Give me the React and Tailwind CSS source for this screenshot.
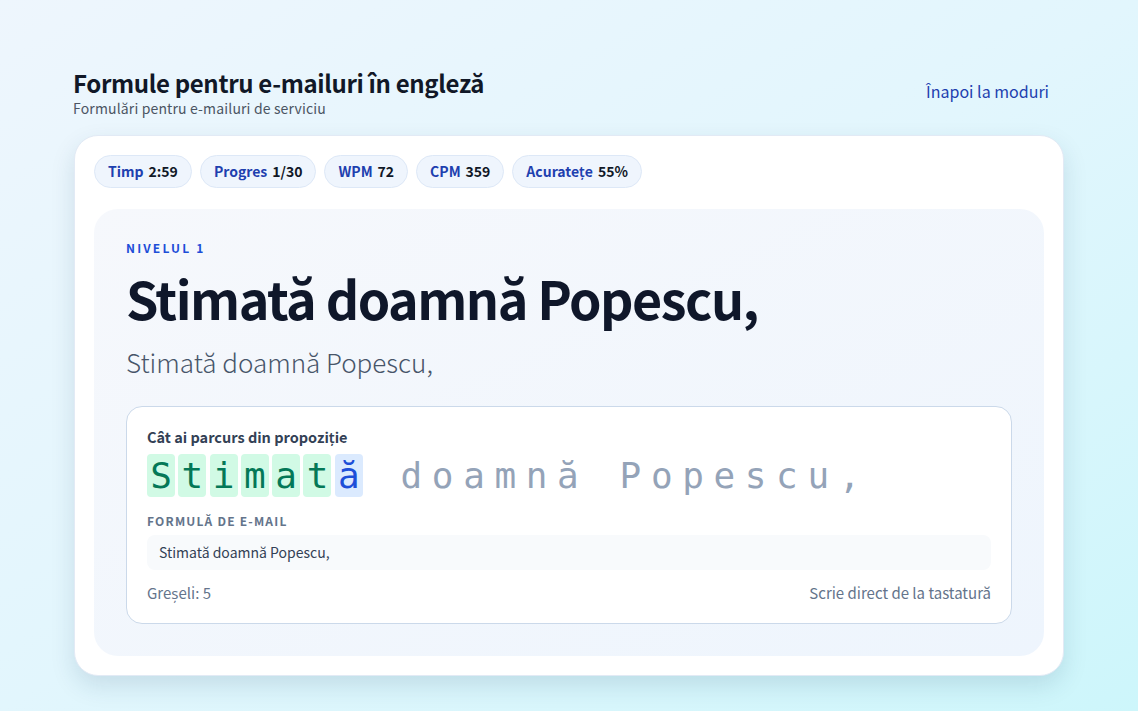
import React from "react";

const stats = [
  ["Timp", "2:59"],
  ["Progres", "1/30"],
  ["WPM", "72"],
  ["CPM", "359"],
  ["Acuratețe", "55%"],
];

const sentence = "Stimată doamnă Popescu,";
const typed = 6;

export default function App() {
  const chars = Array.from(sentence);
  return (
    <div
      className="min-h-[711px] w-full bg-gradient-to-br from-[#eef6fd] via-[#e2f6fd] to-[#cdf6fb] px-[74px] pt-[67px] pb-[35px]"
      style={{ fontFamily: '"Noto Sans CJK JP", "Noto Sans", sans-serif' }}
    >
      <div className="flex items-start justify-between">
        <div>
          <h1 className="-ml-px text-[24px] font-semibold leading-[32px] tracking-[-0.35px] text-[#111827]">
            Formule pentru e-mailuri în engleză
          </h1>
          <p className="-ml-px text-[14px] leading-[18px] tracking-[0.15px] text-[#4b5563]">
            Formulări pentru e-mailuri de serviciu
          </p>
        </div>
        <button className="mt-[12px] mr-[15px] text-[16px] leading-[24px] text-[#1e40af]">
          Înapoi la moduri
        </button>
      </div>

      <div className="mt-[18px] w-[990px] rounded-[24px] border border-[#e2eaf5] bg-white p-[19px] shadow-[0_10px_25px_rgba(15,60,90,0.13)]">
        <div className="flex gap-[8px]">
          {stats.map(([k, v]) => (
            <div
              key={k}
              className="flex h-[33px] items-center rounded-full border border-[#dde8f7] bg-[#eff5fd] px-[13px] text-[14px] font-semibold"
            >
              <span className="text-[#1e40af]">{k}</span>
              <span className="ml-[5px] text-[#111827]">{v}</span>
            </div>
          ))}
        </div>

        <div className="mt-[21px] rounded-[24px] bg-gradient-to-br from-[#f6f8fc] to-[#eef5fd] px-[32px] pt-[31px] pb-[32px]">
          <div className="text-[12px] font-bold leading-[16px] tracking-[0.18em] text-[#1d4ed8]">
            NIVELUL 1
          </div>
          <div className="mt-[10px] text-[52px] font-bold leading-[64px] tracking-[-1.5px] text-[#0f172a]">
            Stimată doamnă Popescu,
          </div>
          <div className="mt-[15px] text-[26px] font-light leading-[34px] text-[#475569]">
            Stimată doamnă Popescu,
          </div>

          <div className="mt-[27px] rounded-[16px] border border-[#cbd9ea] bg-white px-[20px] pt-[20px] pb-[20px]">
            <div className="text-[14.5px] font-semibold leading-[20px] text-[#334155]">
              Cât ai parcurs din propoziție
            </div>
            <div
              className="mt-[7px] flex gap-[3.3px] text-[36px] leading-[43px]"
              style={{ fontFamily: '"DejaVu Sans Mono", monospace' }}
            >
              {chars.map((c, i) => {
                let cls = "text-[#94a3b8]";
                if (i < typed) cls = "bg-[#d1fae5] text-[#047857]";
                else if (i === typed) cls = "bg-[#dbeafe] text-[#1d4ed8]";
                return (
                  <span
                    key={i}
                    className={`inline-block w-[28px] rounded-[4px] text-center ${cls}`}
                  >
                    {c === " " ? "\u00a0" : c}
                  </span>
                );
              })}
            </div>
            <div className="mt-[16px] text-[12px] font-semibold leading-[16px] tracking-[0.1em] text-[#64748b]">
              FORMULĂ DE E-MAIL
            </div>
            <div className="mt-[6px] rounded-[8px] bg-[#f8fafc] px-[12px] py-[8px] text-[14px] leading-[19px] text-[#334155]">
              Stimată doamnă Popescu,
            </div>
            <div className="mt-[13px] flex justify-between text-[15px] leading-[20px] text-[#64748b]">
              <span>Greșeli: 5</span>
              <span>Scrie direct de la tastatură</span>
            </div>
          </div>
        </div>
      </div>
    </div>
  );
}
